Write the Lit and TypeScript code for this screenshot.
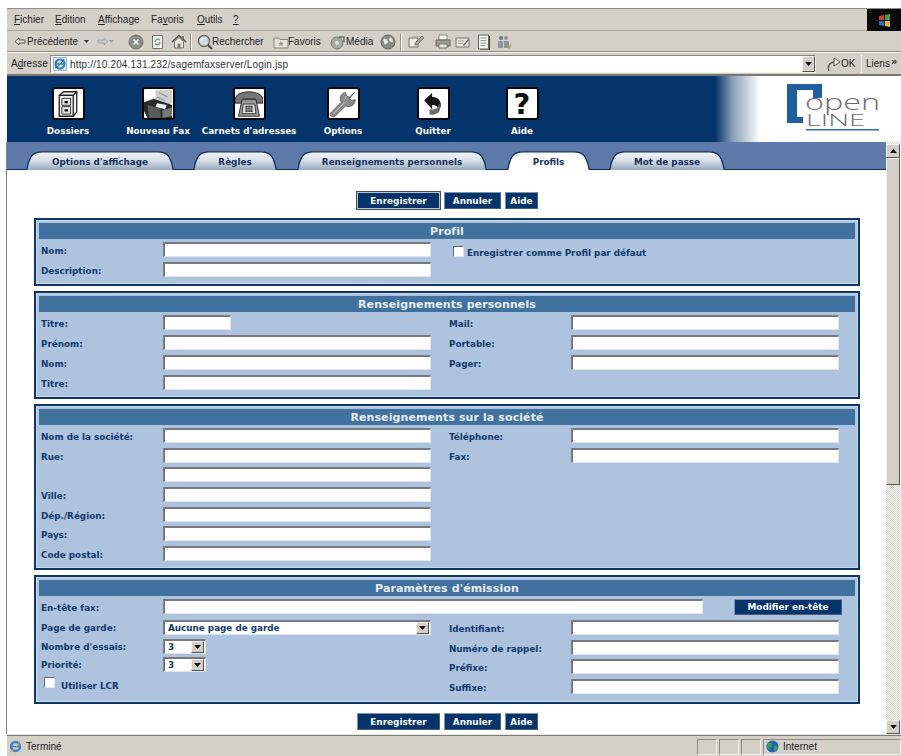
import { LitElement, html, css, svg } from "lit";
import { customElement } from "lit/decorators.js";

const tabs = [
  { t: "Options d'affichage", w: 148, gap: 19 },
  { t: "Règles", w: 84, gap: 20 },
  { t: "Renseignements personnels", w: 190, gap: 20 },
  { t: "Profils", w: 83, gap: 19, active: true },
  { t: "Mot de passe", w: 116, gap: 0 },
];

const menu = [["F", "ichier"], ["E", "dition"], ["A", "ffichage"], ["Fa", "voris", "v"], ["O", "utils"], ["?", ""]];

const icoBack = svg`<svg width="12" height="10" viewBox="0 0 12 10"><path d="M5 1 1 4.500 5 8V6h6V3H5z" fill="#e9e6dc" stroke="#555" stroke-width="1"/></svg>`;
const icoFwd = svg`<svg width="12" height="10" viewBox="0 0 12 10"><path d="M7 1 11 4.500 7 8V6H1V3h6z" fill="#b5c6cf" stroke="#a7a7a0" stroke-width="1"/></svg>`;
const caret = svg`<svg width="5" height="3" viewBox="0 0 5 3"><path d="M0 0h5L2.500 3z" fill="#333"/></svg>`;
const caretL = svg`<svg width="5" height="3" viewBox="0 0 5 3"><path d="M0 0h5L2.500 3z" fill="#999"/></svg>`;
const icoStop = svg`<svg width="16" height="16" viewBox="0 0 16 16"><circle cx="8" cy="8" r="7" fill="#8d8d8a" stroke="#77776f"/><path d="M5.500 5.500l5 5m0-5l-5 5" stroke="#fff" stroke-width="1.600"/></svg>`;
const icoRefresh = svg`<svg width="15" height="16" viewBox="0 0 15 16"><path d="M2.500 1.500h10v13h-10z" fill="#f2f1ec" stroke="#77776f"/><path d="M5 8a2.800 2.800 0 0 1 5-1.700M10 8a2.800 2.800 0 0 1-5 1.700" fill="none" stroke="#6f8f78" stroke-width="1.200"/></svg>`;
const icoHome = svg`<svg width="16" height="15" viewBox="0 0 16 15"><path d="M1 8 8 1.500 15 8" fill="none" stroke="#55554f" stroke-width="1.500"/><path d="M3.500 7.500V14h9V7.500L8 3.500z" fill="#e8e6df" stroke="#77776f"/><path d="M6.500 9.500h3V14h-3z" fill="#7d7d78"/><path d="M11 2h2v3h-2z" fill="#77776f"/></svg>`;
const icoSearch = svg`<svg width="16" height="16" viewBox="0 0 16 16"><circle cx="7" cy="7" r="5.500" fill="#cfd9d6" stroke="#66665f" stroke-width="1.400"/><path d="M4 7a3 3 0 0 1 5-2" fill="none" stroke="#fff"/><path d="M11 11l4 4" stroke="#444" stroke-width="2"/></svg>`;
const icoFav = svg`<svg width="16" height="14" viewBox="0 0 16 14"><path d="M1 3h5l1 1.500h8V13H1z" fill="#e6e3d8" stroke="#85857c"/><path d="M8 6l.8 1.800 1.900.2-1.400 1.300.4 1.900L8 10.200 6.300 11.200l.4-1.900L5.300 8l1.900-.2z" fill="#8f9a94"/></svg>`;
const icoMedia = svg`<svg width="16" height="16" viewBox="0 0 16 16"><circle cx="7" cy="9" r="6" fill="#a9a9a3" stroke="#77776f"/><circle cx="7" cy="9" r="2" fill="#e2e2dc"/><path d="M9 3h5v5" fill="none" stroke="#66665f" stroke-width="1.400"/></svg>`;
const icoHist = svg`<svg width="16" height="16" viewBox="0 0 16 16"><circle cx="8" cy="8" r="7" fill="#8b8b86" stroke="#66665f"/><path d="M3 6c3-3 4 0 5 1s-2 3-3 4M10 3c2 1 3 3 3 5-2 1-3-1-4-2z" fill="#e8e8e2"/></svg>`;
const icoMail = svg`<svg width="17" height="14" viewBox="0 0 17 14"><path d="M1 3h9v9H1z" fill="#eeede6" stroke="#77776f"/><path d="M4 1.500h8l1 3" fill="none" stroke="#b5b5ad"/><path d="M7 8l7-7 2 2-7 7H7z" fill="#a1a19a" stroke="#66665f" stroke-width=".7"/></svg>`;
const icoPrint = svg`<svg width="16" height="15" viewBox="0 0 16 15"><path d="M4 1h8v5H4z" fill="#f2f1ea" stroke="#88887f"/><path d="M1 6h14v6H1z" fill="#9d9d96" stroke="#66665f"/><path d="M4 10h8v4H4z" fill="#e8e7e0" stroke="#77776f"/></svg>`;
const icoEdit = svg`<svg width="15" height="14" viewBox="0 0 15 14"><path d="M1 3h13v9H1z" fill="#e6e5dd" stroke="#77776f"/><path d="M3 6h6M3 8.500h5" stroke="#a2a29c"/><path d="M8 10l5-6 1 1-5 6z" fill="#6e6e68"/></svg>`;
const icoDoc = svg`<svg width="14" height="16" viewBox="0 0 14 16"><path d="M1.500 1h10v14h-10z" fill="#f5f4ef" stroke="#66665f"/><path d="M12.500 2v14H3" fill="none" stroke="#3a3a36"/><path d="M3.500 4h6M3.500 6.500h6M3.500 9h6M3.500 11.500h5" stroke="#9a9a94"/></svg>`;
const icoMsn = svg`<svg width="15" height="16" viewBox="0 0 15 16"><circle cx="4" cy="4" r="2" fill="#6c7480"/><circle cx="9" cy="4" r="2" fill="#8e959d"/><path d="M1 7h5v7H1zM7 7h5v7H7z" fill="#8e959d"/><path d="M10 12l2 2 2-3" fill="none" stroke="#a5a83e" stroke-width="1.400"/></svg>`;
const icoIE = svg`<svg width="14" height="14" viewBox="0 0 14 14"><path d="M.5.500h13v13H.500z" fill="#e6eef8" stroke="#9db1cc"/><circle cx="7" cy="7" r="4.500" fill="none" stroke="#2f7ec9" stroke-width="2.200"/><path d="M3 7h8" stroke="#2f7ec9" stroke-width="1.500"/><path d="M2 11c3-1 7-5 9-9" fill="none" stroke="#1f5fa8" stroke-width="1"/></svg>`;
const icoGo = svg`<svg width="15" height="15" viewBox="0 0 15 15"><path d="M3 14C1 9 4 5 9 5" fill="none" stroke="#555" stroke-width="1.300"/><path d="M8 1l6 4-6 4z" fill="#f3f2ec" stroke="#55554f"/><path d="M1 10h3" stroke="#888"/></svg>`;
const icoGlobe = svg`<svg width="13" height="13" viewBox="0 0 13 13"><circle cx="6.500" cy="6.500" r="6" fill="#1a63b8"/><path d="M2 3c2-1 4 0 4 2S3 8 3 10C1 8 1 5 2 3zM8 6c2-1 3 0 4 1-1 3-3 5-4 4-1-2 1-3 0-5z" fill="#3aa04a"/></svg>`;
const icoStatusIE = svg`<svg width="13" height="13" viewBox="0 0 13 13"><circle cx="6.500" cy="6.500" r="4.500" fill="none" stroke="#3b84cf" stroke-width="2.400"/><path d="M2.500 6.500h8" stroke="#3b84cf" stroke-width="1.600"/><path d="M1 12c3-1 8-6 10-11" fill="none" stroke="#e8a33a" stroke-width="1"/></svg>`;

const navIcons = {
  dossiers: svg`<path d="M6 6 11 2h15v23l-4 5H6z" fill="#f4f4f2" stroke="#222" stroke-width="1.500"/><path d="M6 6h16v24M22 6l4-4" fill="none" stroke="#222" stroke-width="1.500"/><path d="M9 9.500h10v8H9zM9 19h10v8.500H9z" fill="#e6e6e6" stroke="#222"/><path d="M12 12.500h4v2.500h-4zM12 22h4v2.500h-4z" fill="#111"/>`,
  fax: svg`<path d="M13 0h19v15l-9 4-10-5z" fill="#cfcfcf"/><path d="M17 3l10 5M15 8l9 4" stroke="#8a8a8a" stroke-width="1.200"/><path d="M0 14l11-4 21 7v15H4L0 24z" fill="#2a2a2a"/><path d="M4 17l15 4v11H6z" fill="#5a5a5a"/><path d="M15 15l11 2-2 5-11-3z" fill="#f5f5f5"/><path d="M21 23l11-3v10l-11 2z" fill="#777"/>`,
  phone: svg`<path d="M0 11C0 6 7 2 16 2s16 4 16 9v4h-8l-1-5H9l-1 5H0z" fill="#777" stroke="#222"/><path d="M8 11h16l4 19H4z" fill="#9a9a9a" stroke="#222"/><path d="M9.500 16h13l1.500 11H8z" fill="#dcdcdc" stroke="#333"/><path d="M12 18h8v7h-8z" fill="#333"/><path d="M14.700 18v7M17.300 18v7M12 20.300h8M12 22.700h8" stroke="#ccc" stroke-width=".7"/>`,
  wrench: svg`<path d="M29 3l-6 5-3-1-1-4c-3 0-7 3-6 8l1 3L2 26c-2 3 2 6 5 4l12-12 3 1c5 0 8-4 8-8l-4 1-3-2z" fill="#8b8b8b" stroke="#5e5e5e"/><path d="M5 27 18 14M20 7l-2 3" stroke="#b4b4b4" stroke-width="1.500" fill="none"/>`,
  quit: svg`<path d="M6 12l9-9v5c5 0 10 3 10 9 0 2-1 4-2 5-1-3-4-5-8-5v5z" fill="#161616"/><path d="M23 15c2 5 1 9-1 11-3 2-7 3-10 2v-6c3 0 7 1 9-2 1-1 2-3 2-5z" fill="#6c6c6c"/>`,
};

const ph = (k: keyof typeof navIcons) => svg`<svg class="navsvg" viewBox="0 0 32 32">${navIcons[k]}</svg>`;

@customElement("tab-shape")
class TabShape extends LitElement {
  static properties = { label: {}, w: { type: Number }, active: { type: Boolean } };
  label = "";
  w = 100;
  active = false;
  static styles = css`
    :host { display: block; position: relative; height: 19px; }
    svg { position: absolute; left: 0; top: 0; }
    span { position: relative; display: block; text-align: center; font: bold 8.800px/17px "DejaVu Sans", sans-serif; color: #17325c; padding-top: 3px; }
  `;
  render() {
    const w = this.w, id = "g" + w;
    const d = `M.7 19 C2 12 4 6 7 3.500 Q10 .8 16 .8 H${w - 16} Q${w - 10} .8 ${w - 7} 3.500 C${w - 4} 6 ${w - 2} 12 ${w - .7} 19`;
    return html`<svg width=${w} height="19" viewBox="0 0 ${w} 19">
      <defs><linearGradient id=${id} x1="0" y1="0" x2="0" y2="1"><stop offset="0" stop-color="#f3f5f8"/><stop offset=".45" stop-color="#dbe2ea"/><stop offset="1" stop-color="#97a9bf"/></linearGradient></defs>
      <path d=${d} fill=${this.active ? "#fff" : `url(#${id})`} stroke="#0d2f5e" stroke-width="1.300"/>
    </svg><span>${this.label}</span>`;
  }
}

@customElement("app-root")
export class AppRoot extends LitElement {
  static styles = css`
    :host { display: block; width: 901px; height: 756px; background: #fff; overflow: hidden; position: relative; font-family: "DejaVu Sans", sans-serif; }
    * { box-sizing: border-box; }
    .page { height: 756px; padding: 8px 0 0 7px; display: flex; flex-direction: column; }
    .ie { font: 10px/1 "Liberation Sans", sans-serif; color: #1f1f1f; background: #d4d0c8; }
    .menubar { height: 23px; border-top: 1px solid #8e8d88; border-bottom: 1px solid #a2a09a; display: grid; grid-template-columns: 7px 41px 43px 53px 46px 36px 1fr 34px; align-items: center; }
    .menubar span { white-space: nowrap; }
    .menubar u { text-decoration: underline; }
    .flag { grid-column: 8; height: 22px; background: #0a0a0a; display: flex; align-items: center; justify-content: center; }
    .toolbar { height: 21px; padding-top: 1px; border-bottom: 1px solid #8e8d88; display: grid; grid-template-columns: 7px 13px 57px 9px 4px 12px 19px 16px 6px 15px 6px 16px 3px 2px 5px 15px 61px 15px 42px 16px 34px 15px 5px 2px 6px 16px 11px 15px 5px 13px 9px 13px 7px 13px; align-items: center; white-space: nowrap; }
    .toolbar svg { display: block; }
    .sep { height: 18px; width: 2px; border-left: 1px solid #8e8d88; border-right: 1px solid #fff; }
    .addr { height: 23px; padding-top: 1px; border-top: 1px solid #f2f1ec; border-bottom: 1px solid #77766f; display: grid; grid-template-columns: 4px 39px 766px 10px 35px 28px 20px; align-items: center; white-space: nowrap; }
    .addr u { text-decoration: underline; }
    .urlbox { height: 18px; background: #fff; border: 1px solid; border-color: #8a8880 #f2f1ec #f2f1ec #8a8880; display: flex; align-items: center; gap: 3px; padding-left: 2px; position: relative; }
    .urlbox .dd { margin-left: auto; width: 13px; height: 16px; background: #d4d0c8; border: 1px solid; border-color: #f2f1ec #55544f #55544f #f2f1ec; display: flex; align-items: center; justify-content: center; }
    .urltext { font: 10px "Liberation Sans", sans-serif; letter-spacing: .15px; color: #333; }
    .go { display: flex; align-items: center; gap: 0; }
    .liens { border-left: 1px solid #f2f1ec; height: 18px; display: flex; align-items: center; padding-left: 4px; }
    .more { font: bold 10px/1 "DejaVu Sans", sans-serif; margin-top: -4px; padding-left: 2px; }
    .banner { height: 67px; flex: none; background: linear-gradient(90deg, #03346b 0, #03346b 708px, #8ba0b8 726px, #fff 753px); display: grid; grid-template-columns: 16px 90px 90px 92px 96px 84px 94px 1fr 94px 21px; border-top: 1px solid #7a7a7a; }
    .nav { display: flex; flex-direction: column; align-items: center; padding-top: 11px; }
    .navbox { width: 33px; height: 33px; background: #fff; border: 2.500px solid #08080c; border-radius: 3px; display: flex; align-items: center; justify-content: center; overflow: hidden; }
    .navsvg { width: 28px; height: 28px; display: block; }
    .q { font: 900 29px/28px "DejaVu Sans", sans-serif; color: #111; }
    .nav b { font: bold 8.800px/12px "DejaVu Sans", sans-serif; color: #fff; margin-top: 5px; white-space: nowrap; }
    .logo { grid-column: 9; margin-top: 7px; display: block; overflow: visible; }
    .lower { flex: 1; display: flex; min-height: 0; }
    .main { width: 880px; flex: none; display: flex; flex-direction: column; border-left: 1px solid #7f7f7f; margin-left: -1px; }
    .tabbar { height: 28px; flex: none; background: #5d7aa8; border-bottom: 1px solid #0d2f5e; padding: 9px 0 0 19px; display: flex; }
    .content { flex: 1; background: #fff; padding-top: 22px; overflow: hidden; }
    .btns { display: flex; justify-content: flex-start; gap: 4px; padding-left: 350px; height: 17px; }
    .btn { height: 17px; background: #03346b; color: #fff; font: bold 8.900px/16px "DejaVu Sans", sans-serif; text-align: center; border: 1px solid; border-color: #7f93ad #4d5e74 #4d5e74 #7f93ad; }
    .btn.e { width: 83px; } .btn.a { width: 57px; } .btn.h { width: 33px; }
    .btn.prim { outline: 1px solid #4a4a4a; border: 1px solid #b9c4d2; }
    .gap9 { height: 9px; } .gap4 { height: 4px; }
    .panel { margin: 0 0 5px 27px; width: 826px; border: 2px solid #0f3566; background: #adc3de; box-shadow: inset 0 0 0 1px #c9d9ec; padding: 3px 3px 2px 3px; }
    .phead { height: 16px; background: #41719f; color: #e6eef7; font: bold 11px/17px "DejaVu Sans", sans-serif; text-align: center; margin-bottom: 3px; letter-spacing: .1px; }
    .grid { display: grid; grid-template-columns: 124px 268px 18px 122px 268px; grid-auto-rows: 20px; align-items: start; }
    .grid.tight { grid-auto-rows: 19.700px; }
    .lab { font: bold 8.800px/15px "DejaVu Sans", sans-serif; color: #123a6d; padding: 2px 0 0 2px; white-space: nowrap; }
    .grid > .lab:nth-child(5n+4), .p4right .lab { padding-left: 0; }
    .in { display: block; width: 268px; height: 15px; background: #fff; border: 1px solid; border-top-width: 2px; border-left-width: 2px; border-color: #77797c #dfe6ef #dfe6ef #77797c; padding: 0; margin: 0; outline: none; }
    .in.short { width: 68px; }
    .in.wide { width: 540px; }
    .chk { display: flex; align-items: flex-start; gap: 3px; font: bold 8.800px/15px "DejaVu Sans", sans-serif; color: #123a6d; }
    .chk.top { grid-column: 4 / 6; padding: 4px 0 0 4px; }
    .chk em { font-style: normal; }
    .box { width: 11px; height: 11px; background: #fff; border: 1px solid; border-color: #66686a #dfe6ef #dfe6ef #66686a; flex: none; }
    .sel { height: 15px; background: #fff; border: 1px solid; border-color: #77797c #dfe6ef #dfe6ef #77797c; border-top-width: 2px; border-left-width: 2px; display: flex; align-items: center; font: bold 8.800px/1 "DejaVu Sans", sans-serif; color: #123a6d; padding-left: 3px; white-space: nowrap; }
    .sel em { font-style: normal; padding-top: 2px; }
    .sel i { margin-left: auto; width: 13px; height: 12px; background: #d4d0c8; border: 1px solid; border-color: #f2f1ec #55544f #55544f #f2f1ec; display: flex; align-items: center; justify-content: center; margin-right: 1px; }
    .sel.num { width: 43px; }
    .sel.big { width: 268px; }
    .p4top { display: flex; height: 21px; align-items: flex-start; }
    .p4top .lab { width: 124px; flex: none; }
    .p4top .btn { width: 108px; margin-left: 31px; height: 16px; line-height: 14px; }
    .p4left { display: grid; grid-template-rows: 19px 18px 20px 22px; }
    .p4left .lab { padding-top: 1px; }
    .p4right { display: grid; grid-template-columns: 122px 268px; grid-auto-rows: 19.700px; padding-left: 18px; }
    .p4wrap { display: grid; grid-template-columns: 392px 408px; height: 80px; }
    .p4row { display: grid; grid-template-columns: 124px 268px; }
    .lcr { padding: 0 0 0 5px; gap: 6px; }
    .lcr em { padding-top: 2px; }
    .scroll { width: 14px; flex: none; display: flex; flex-direction: column; background: repeating-conic-gradient(#fff 0 25%, #d4d0c8 0 50%) 0 0 / 2px 2px; padding-top: 2px; }
    .sb { width: 14px; height: 14px; background: #d4d0c8; border: 1px solid; border-color: #f2f1ec #55544f #55544f #f2f1ec; display: flex; align-items: center; justify-content: center; flex: none; }
    .thumb { width: 14px; height: 327px; background: #d4d0c8; border: 1px solid; border-color: #f2f1ec #55544f #55544f #f2f1ec; flex: none; }
    .sbgap { flex: 1; }
    .status { height: 22px; flex: none; border-top: 1px solid #e8e6e0; box-shadow: inset 0 1px 0 #7c7b76; display: grid; grid-template-columns: 690px 20px 2px 20px 2px 20px 2px 1fr; align-items: center; position: relative; padding-top: 2px; }
    .status .l { display: flex; align-items: center; gap: 4px; padding-left: 2px; }
    .cell { height: 16px; border: 1px solid; border-color: #8e8d88 #f2f1ec #f2f1ec #8e8d88; }
    .inet { height: 16px; border: 1px solid; border-color: #8e8d88 #f2f1ec #f2f1ec #8e8d88; display: flex; align-items: center; gap: 4px; padding-left: 2px; }
  `;

  input(cls = "") { return html`<input class="in ${cls}" />`; }

  render() {
    const row = (l: string, r: string | null, short = false) => html`
      <div class="lab">${l}</div>${this.input(short ? "short" : "")}<div></div>
      ${r === null ? html`<div></div><div></div>` : html`<div class="lab">${r}</div>${this.input()}`}`;
    const arrow = svg`<svg width="7" height="4" viewBox="0 0 7 4"><path d="M0 0h7L3.500 4z" fill="#111"/></svg>`;
    const buttons = (prim: boolean) => html`<div class="btns">
      <div class="btn e ${prim ? "prim" : ""}">Enregistrer</div><div class="btn a">Annuler</div><div class="btn h">Aide</div></div>`;
    return html`<div class="page">
      <div class="ie menubar">
        <span></span>
        ${menu.map(m => m[2] ? html`<span>Fa<u>v</u>oris</span>` : html`<span><u>${m[0]}</u>${m[1]}</span>`)}
        <span class="flag"><svg width="13" height="13" viewBox="0 0 13 13"><path d="M1 2l5-1v5H1z" fill="#c4442e"/><path d="M7 1l5-1v6H7z" fill="#4f9a3e"/><path d="M1 7h5v5l-5-1z" fill="#3a68b8"/><path d="M7 7h5v6l-5-1z" fill="#e2b63a"/></svg></span>
      </div>
      <div class="ie toolbar">
        <span></span><span>${icoBack}</span><span>Précédente</span><span>${caret}</span><span></span><span>${icoFwd}</span><span>${caretL}</span>
        <span>${icoStop}</span><span></span><span>${icoRefresh}</span><span></span><span>${icoHome}</span><span></span><span class="sep"></span><span></span>
        <span>${icoSearch}</span><span>Rechercher</span><span>${icoFav}</span><span>Favoris</span><span>${icoMedia}</span><span>Média</span><span>${icoHist}</span><span></span><span class="sep"></span><span></span>
        <span>${icoMail}</span><span></span><span>${icoPrint}</span><span></span><span>${icoEdit}</span><span></span><span>${icoDoc}</span><span></span><span>${icoMsn}</span>
      </div>
      <div class="ie addr">
        <span></span><span>A<u>d</u>resse</span>
        <div class="urlbox">${icoIE}<span class="urltext">http://10.204.131.232/sagemfaxserver/Login.jsp</span><span class="dd">${arrow}</span></div>
        <span></span><span class="go">${icoGo}OK</span><span class="liens">Liens</span><span class="more">»</span>
      </div>
      <div class="banner">
        <span></span>
        <div class="nav"><div class="navbox">${ph("dossiers")}</div><b>Dossiers</b></div>
        <div class="nav"><div class="navbox">${ph("fax")}</div><b>Nouveau Fax</b></div>
        <div class="nav"><div class="navbox">${ph("phone")}</div><b>Carnets d'adresses</b></div>
        <div class="nav"><div class="navbox">${ph("wrench")}</div><b>Options</b></div>
        <div class="nav"><div class="navbox">${ph("quit")}</div><b>Quitter</b></div>
        <div class="nav"><div class="navbox"><span class="q">?</span></div><b>Aide</b></div>
        <svg class="logo" width="95" height="50" viewBox="0 0 95 50">
          <path d="M1 1H36V15H27V7H11V34H17V40H1Z" fill="#1f5f9e"/>
          <text x="19" y="27" font-family="Open Sans, sans-serif" font-size="22" font-weight="300" fill="#6d6d6d" textLength="75" lengthAdjust="spacingAndGlyphs">open</text>
          <text x="20" y="43" font-family="Open Sans, sans-serif" font-size="15.500" font-weight="300" fill="#6d6d6d" textLength="59" lengthAdjust="spacingAndGlyphs">LINE</text>
          <rect x="20" y="46" width="73" height="1.500" fill="#2f6aa3"/>
        </svg>
      </div>
      <div class="lower">
        <div class="main">
          <div class="tabbar">
            ${tabs.map(t => html`<tab-shape .label=${t.t} .w=${t.w} .active=${!!t.active} style="width:${t.w}px;margin-right:${t.gap}px"></tab-shape>`)}
          </div>
          <div class="content">
            ${buttons(true)}
            <div class="gap9"></div>
            <div class="panel">
              <div class="phead">Profil</div>
              <div class="grid">
                <div class="lab">Nom:</div>${this.input()}<div></div>
                <div class="chk top"><span class="box"></span><em>Enregistrer comme Profil par défaut</em></div>
                <div class="lab">Description:</div>${this.input()}
              </div>
            </div>
            <div class="panel">
              <div class="phead">Renseignements personnels</div>
              <div class="grid">
                ${row("Titre:", "Mail:", true)}
                ${row("Prénom:", "Portable:")}
                ${row("Nom:", "Pager:")}
                ${row("Titre:", null)}
              </div>
            </div>
            <div class="panel">
              <div class="phead">Renseignements sur la société</div>
              <div class="grid tight">
                ${row("Nom de la société:", "Téléphone:")}
                ${row("Rue:", "Fax:")}
                ${row("", null)}
                ${row("Ville:", null)}
                ${row("Dép./Région:", null)}
                ${row("Pays:", null)}
                ${row("Code postal:", null)}
              </div>
            </div>
            <div class="panel">
              <div class="phead">Paramètres d'émission</div>
              <div class="p4top"><div class="lab">En-tête fax:</div>${this.input("wide")}<div class="btn">Modifier en-tête</div></div>
              <div class="p4wrap">
                <div class="p4left">
                  <div class="p4row"><div class="lab">Page de garde:</div><div class="sel big"><em>Aucune page de garde</em><i>${arrow}</i></div></div>
                  <div class="p4row"><div class="lab">Nombre d'essais:</div><div class="sel num"><em>3</em><i>${arrow}</i></div></div>
                  <div class="p4row"><div class="lab">Priorité:</div><div class="sel num"><em>3</em><i>${arrow}</i></div></div>
                  <div class="chk lcr"><span class="box"></span><em>Utiliser LCR</em></div>
                </div>
                <div class="p4right">
                  <div class="lab">Identifiant:</div>${this.input()}
                  <div class="lab">Numéro de rappel:</div>${this.input()}
                  <div class="lab">Préfixe:</div>${this.input()}
                  <div class="lab">Suffixe:</div>${this.input()}
                </div>
              </div>
            </div>
            <div class="gap4"></div>
            ${buttons(false)}
          </div>
        </div>
        <div class="scroll">
          <div class="sb"><svg width="7" height="4" viewBox="0 0 7 4"><path d="M0 4h7L3.500 0z" fill="#111"/></svg></div>
          <div class="thumb"></div>
          <div class="sbgap"></div>
          <div class="sb">${arrow}</div>
        </div>
      </div>
      <div class="ie status">
        <div class="l">${icoStatusIE}<span>Terminé</span></div>
        <div class="cell"></div><span></span><div class="cell"></div><span></span><div class="cell"></div><span></span>
        <div class="inet">${icoGlobe}<span>Internet</span></div>
      </div>
    </div>`;
  }
}
void TabShape;
